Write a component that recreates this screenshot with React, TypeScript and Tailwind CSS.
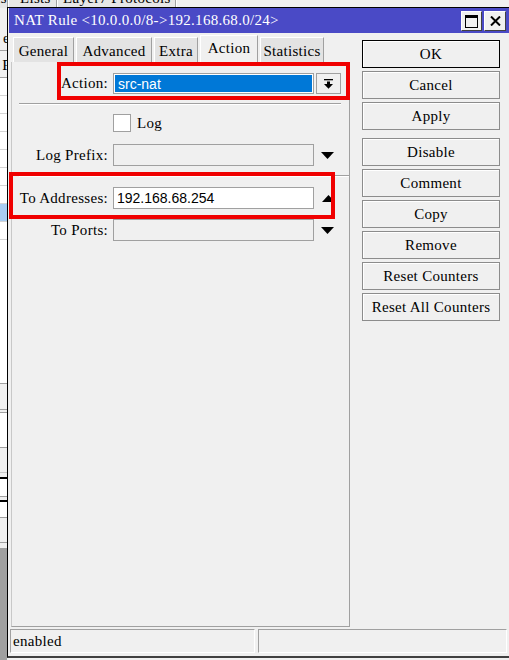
const tabs = [
  { label: "General", w: "w-[61px]" },
  { label: "Advanced", w: "w-[76px]" },
  { label: "Extra", w: "w-[44px]" },
  { label: "Action", w: "w-[58px]", active: true },
  { label: "Statistics", w: "w-[64px]" },
];

const topButtons = ["OK", "Cancel", "Apply"];
const moreButtons = ["Disable", "Comment", "Copy", "Remove", "Reset Counters", "Reset All Counters"];

// strip of the Firewall window that peeks out behind the dialog
const stripRows = [
  "h-[43px] bg-[#f0f0f0] border-b border-[#a0a0a0]",
  "h-[27px] bg-[#f0f0f0] border-b border-[#a0a0a0]",
  "h-[18px] bg-white border-b border-[#d4d4d4]",
  "h-[18px] bg-white border-b border-[#d4d4d4]",
  "h-[18px] bg-white border-b border-[#d4d4d4]",
  "h-[18px] bg-white border-b border-[#d4d4d4]",
  "h-[18px] bg-white border-b border-[#d4d4d4]",
  "h-[18px] bg-white border-b border-[#d4d4d4]",
  "h-[18px] bg-white border-b border-[#d4d4d4]",
  "h-[18px] bg-[#a9cdf2] border-b border-[#d4d4d4]",
  "h-[18px] bg-white border-b border-[#d4d4d4]",
  "h-[144px] bg-white border-b border-[#a0a0a0]",
  "h-[26px] bg-[#f0f0f0] border-b border-[#a0a0a0]",
  "h-[3px] bg-[#f0f0f0] border-b border-[#a0a0a0]",
  "h-[35px] bg-white border-b border-[#a0a0a0]",
  "h-[25px] bg-[#f0f0f0] border-b border-[#c8c8c8]",
  "h-[4px] bg-[#f0f0f0]",
  "h-[2px] bg-black",
  "h-[18px] bg-white border-b border-[#a0a0a0]",
  "h-[3px] bg-[#f0f0f0]",
  "h-[2px] bg-black",
  "h-[16px] bg-white border-b border-[#a0a0a0]",
  "h-[25px] bg-[#f0f0f0] border-b border-[#a0a0a0]",
  "h-[6px] bg-[#f0f0f0] border-b border-[#a0a0a0]",
  "h-[111px] bg-[#a0a0a0]",
];

function Triangle({ up = false }: { up?: boolean }) {
  return (
    <svg width="13" height="7" viewBox="0 0 13 7">
      <polygon points={up ? "0,7 13,7 6.5,0" : "0,0 13,0 6.5,7"} fill="black" />
    </svg>
  );
}

function Row({ label, children }: { label: string; children: React.ReactNode }) {
  return (
    <div className="flex h-[22px] items-center">
      <div className="w-[101px] pr-[5px] text-right leading-none whitespace-nowrap">{label}</div>
      {children}
    </div>
  );
}

function BackgroundWindow() {
  return (
    <>
      <div className="absolute left-0 top-[-11px] flex h-[19px] w-[509px] items-center bg-[#f0f0f0] leading-none">
        <div className="flex h-full w-[7px] items-center justify-end overflow-hidden bg-[#e6e6e6] whitespace-nowrap">
          Rules
        </div>
        <div className="h-full w-[2px] border-l border-[#a0a0a0] bg-white" />
        <div className="flex h-full w-[47px] items-center overflow-hidden whitespace-nowrap bg-[#e6e6e6] pl-[11px]">
          Lists
        </div>
        <div className="h-full w-[2px] border-l border-[#a0a0a0] bg-white" />
        <div className="flex h-full w-[117px] items-center overflow-hidden whitespace-nowrap bg-[#e6e6e6] pl-[5px]">
          Layer7 Protocols
        </div>
        <div className="h-full w-[2px] border-l border-[#a0a0a0] bg-white" />
      </div>
      <div className="absolute left-0 top-[8px] flex w-[7px] flex-col overflow-hidden">
        {stripRows.map((cls, i) => (
          <div key={i} className={`${cls} flex items-end justify-end overflow-hidden leading-none`}>
            {i === 0 && <span className="mb-[4px] mr-[-3px]">e</span>}
            {i === 1 && <span className="mb-[4px] mr-[-4px]">P</span>}
          </div>
        ))}
      </div>
    </>
  );
}

function TitleBar() {
  return (
    <div className="ml-[1px] flex h-[25px] items-start bg-[#4a4ac6] text-white">
      <div className="mt-[4px] pl-[5px] text-[15px] leading-[17px] whitespace-nowrap">
        NAT Rule &lt;10.0.0.0/8-&gt;192.168.68.0/24&gt;
      </div>
      <div className="ml-auto mr-[4px] mt-[3px] flex gap-[2px]">
        <div className="flex h-[20px] w-[21px] items-center justify-center border border-t-white border-l-white border-b-[#404040] border-r-[#404040] bg-[#f0f0f0]">
          <div className="h-[13px] w-[13px] border border-t-[3px] border-black" />
        </div>
        <div className="flex h-[20px] w-[22px] items-center justify-center border border-t-white border-l-white border-b-[#404040] border-r-[#404040] bg-[#f0f0f0]">
          <svg width="11" height="10" viewBox="0 0 11 10">
            <path d="M1 0.5 L10 9.5 M10 0.5 L1 9.5" stroke="black" strokeWidth="2" />
          </svg>
        </div>
      </div>
    </div>
  );
}

function Panel() {
  return (
    <div className="relative h-[565px] border border-t-0 border-[#a0a0a0] border-l-[#c8c8c8]">
      <div className="mt-[11px] flex h-[21px] items-center">
        <div className="w-[101px] pr-[5px] text-right leading-none">Action:</div>
        <div className="flex h-[21px] w-[201px] items-center border border-[#a0a0a0] bg-white p-[1px]">
          <div className="flex h-full w-full items-center bg-[#0078d7] pl-[3px] font-['Liberation_Sans',sans-serif] text-[14px] leading-none tracking-normal text-white">
            src-nat
          </div>
        </div>
        <div className="ml-[2px] flex h-[21px] w-[25px] items-center justify-center border border-[#a0a0a0] bg-[#f0f0f0]">
          <svg width="9" height="10" viewBox="0 0 9 10">
            <rect x="0" y="0" width="9" height="1.3" fill="black" />
            <rect x="3" y="2.5" width="3" height="2.7" fill="black" />
            <polygon points="0,5 9,5 4.5,9.8" fill="black" />
          </svg>
        </div>
      </div>

      <div className="ml-[7px] mt-[9px] h-[2px] w-[322px] border-t border-[#a0a0a0] bg-white" />

      <div className="ml-[101px] mt-[9px] flex h-[18px] items-center">
        <div className="h-[18px] w-[18px] border border-[#a0a0a0] bg-white" />
        <span className="ml-[6px] leading-none">Log</span>
      </div>

      <div className="mt-[12px]">
        <Row label="Log Prefix:">
          <div className="h-[22px] w-[201px] border border-[#a0a0a0] bg-[#f0f0f0]" />
          <div className="ml-[7px] flex items-center">
            <Triangle />
          </div>
        </Row>
      </div>

      <div className="ml-[7px] mt-[9px] h-[2px] w-[330px] border-t border-[#a0a0a0] bg-white" />

      <div className="mt-[10px]">
        <Row label="To Addresses:">
          <div className="flex h-[22px] w-[201px] items-center border border-[#a0a0a0] bg-white pl-[3px] font-['Liberation_Sans',sans-serif] text-[14px] leading-none tracking-normal">
            192.168.68.254
          </div>
          <div className="ml-[8px] flex items-center">
            <Triangle up />
          </div>
        </Row>
      </div>

      <div className="mt-[10px]">
        <Row label="To Ports:">
          <div className="h-[22px] w-[201px] border border-[#a0a0a0] bg-[#f0f0f0]" />
          <div className="ml-[7px] flex items-center">
            <Triangle />
          </div>
        </Row>
      </div>

      {/* red annotation boxes */}
      <div className="absolute left-[45px] top-0 h-[38px] w-[293px] border-4 border-[#f00000]" />
      <div className="absolute left-[-3px] top-[110px] h-[47px] w-[326px] border-4 border-[#f00000]" />
    </div>
  );
}

function SideButton({ label, primary = false }: { label: string; primary?: boolean }) {
  return (
    <div
      className={`flex h-[28px] items-center justify-center border bg-[#f0f0f0] leading-none whitespace-nowrap shadow-[inset_1px_1px_0_#ffffff] ${
        primary ? "border-black" : "border-[#8c8c8c]"
      }`}
    >
      {label}
    </div>
  );
}

export default function App() {
  return (
    <div className="relative h-[660px] w-[509px] overflow-hidden bg-[#f0f0f0] font-['Liberation_Serif',serif] text-[15px] tracking-[0.3px] text-black">
      <BackgroundWindow />
      <div className="absolute left-[7px] top-[7px] flex h-[651px] w-[504px] flex-col border border-black border-b-[2px] border-b-[#404040] bg-[#f0f0f0]">
        <TitleBar />
        <div className="flex h-[594px]">
          <div className="ml-[3px] flex w-[339px] flex-col pt-[2px]">
            <div className="flex h-[27px] items-end gap-[2px] pl-[2px]">
              {tabs.map((t) =>
                t.active ? (
                  <div
                    key={t.label}
                    className={`${t.w} flex h-[27px] items-center justify-center border-t border-l border-white border-r border-r-[#a0a0a0] bg-[#f0f0f0] pb-[1px] leading-none`}
                  >
                    {t.label}
                  </div>
                ) : (
                  <div
                    key={t.label}
                    className={`${t.w} flex h-[25px] items-center justify-center border-t border-l border-white border-r border-r-[#a0a0a0] bg-[#e3e3e3] pt-[2px] leading-none`}
                  >
                    {t.label}
                  </div>
                )
              )}
            </div>
            <Panel />
          </div>
          <div className="ml-[12px] mt-[7px] flex w-[138px] flex-col">
            <div className="flex flex-col gap-[3px]">
              {topButtons.map((b) => (
                <SideButton key={b} label={b} primary={b === "OK"} />
              ))}
            </div>
            <div className="mt-[8px] flex flex-col gap-[3px]">
              {moreButtons.map((b) => (
                <SideButton key={b} label={b} />
              ))}
            </div>
          </div>
        </div>
        <div className="ml-[2px] mt-[2px] flex h-[24px] gap-[3px]">
          <div className="flex w-[245px] items-center border border-t-[#a0a0a0] border-l-[#a0a0a0] border-b-white border-r-white pl-[2px] leading-none">
            enabled
          </div>
          <div className="w-[249px] border border-t-[#a0a0a0] border-l-[#a0a0a0] border-b-white border-r-white" />
        </div>
      </div>
    </div>
  );
}
